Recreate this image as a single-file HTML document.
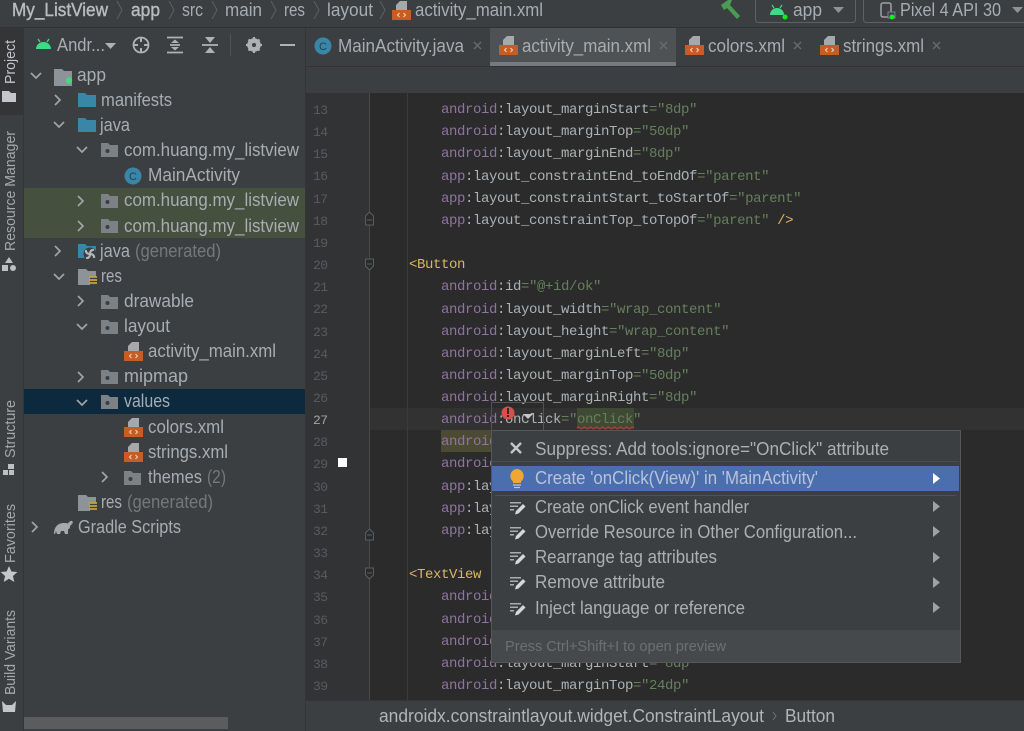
<!DOCTYPE html>
<html><head><meta charset="utf-8"><style>
html,body{margin:0;padding:0;background:#3c3f41;width:1024px;height:731px;overflow:hidden}
svg{display:block}
text{font-family:"Liberation Sans",sans-serif;font-size:18px;fill:#a6adb3}
.g{fill:#74787b}
.c text,text.c{font-family:"Liberation Mono",monospace;font-size:14px;letter-spacing:-.4px}
text.n{font-family:"Liberation Mono",monospace;font-size:13px;fill:#585c5f;letter-spacing:-.5px}
.p{fill:#8f73a3}.w{fill:#adb1b3}.v{fill:#64805a}.t{fill:#dcb464}
.pop{fill:#aab0b3}
.fold{fill:#7c8186}
.arr{fill:none;stroke:#a0a4a6;stroke-width:1.700}
</style></head><body>
<svg width="1024" height="731" viewBox="0 0 1024 731" xmlns="http://www.w3.org/2000/svg">
<defs>
<g id="fd"><path class="fold" d="M0 1h7l2 2h8v12H0z"/><circle cx="6.500" cy="9" r="2" fill="#3c3f41"/></g>
<g id="fb"><path fill="#3a86a8" d="M0 1h7l2 2h9v12H0z"/></g>
<g id="xml"><path fill="#a4a9ac" d="M8 0h7v9H4V4z"/><rect x="0" y="9" width="19" height="10" fill="#c75d22"/><path d="M7.500 12l-2 2 2 2M11.500 12l2 2-2 2" fill="none" stroke="#e8d8cc" stroke-width="1"/></g>
<g id="au"><path class="arr" d="M0 0l5 5 5-5"/></g>
<g id="ar"><path class="arr" d="M0 0l5 5-5 5"/></g>
<g id="bul"><path fill="#a9adb0" d="M1 4h11v1.500H1zM1 7.500h8V9H1zM1 11h4v1.500H1z"/><path fill="#d5d8da" d="M7 13l7-7 2.500 2.500-7 7-3.500 1z"/></g>
<g id="tri"><path fill="#9ea2a5" d="M0 0l7 5.500-7 5.500z"/></g>
<g id="xx"><path d="M0 0l7 7M7 0l-7 7" stroke="#696c6e" stroke-width="1.300" fill="none"/></g>
<g id="fr"><path d="M0 0h8l2 2h8v5.500h-6V16H0z" fill="#8d9499"/><path d="M11 8h8M11 11h8M11 14h8" stroke="#c9a03c" stroke-width="1.800"/></g>
<clipPath id="ed"><rect x="306" y="93" width="718" height="607"/></clipPath>
</defs>

<rect width="1024" height="731" fill="#3c3f41"/>
<rect x="0" y="27" width="1024" height="1" fill="#2f3132"/>

<!-- title bar -->
<text x="12" y="16" textLength="96" lengthAdjust="spacingAndGlyphs" style="fill:#b8bcbe;stroke:#b8bcbe;stroke-width:.4">My_ListView</text>
<text x="131" y="16" textLength="29" lengthAdjust="spacingAndGlyphs" style="fill:#b8bcbe;stroke:#b8bcbe;stroke-width:.4">app</text>
<text x="182" y="16" textLength="21" lengthAdjust="spacingAndGlyphs">src</text>
<text x="225" y="16" textLength="37" lengthAdjust="spacingAndGlyphs">main</text>
<text x="284" y="16" textLength="21" lengthAdjust="spacingAndGlyphs">res</text>
<text x="327" y="16" textLength="46" lengthAdjust="spacingAndGlyphs">layout</text>
<text x="415" y="16" textLength="128" lengthAdjust="spacingAndGlyphs">activity_main.xml</text>
<g fill="none" stroke="#5d6063" stroke-width="1"><path d="M117 1l5 9-5 9M169 1l5 9-5 9M212 1l5 9-5 9M271 1l5 9-5 9M314 1l5 9-5 9M380 1l5 9-5 9"/></g>
<use href="#xml" x="392" y="1"/>

<!-- hammer -->
<path d="M721 5l7-5h4l-2 5 10 11-3 3-10-11-3 2z" fill="#499c54"/>
<rect x="755.500" y="-5" width="100" height="27.500" rx="3" fill="none" stroke="#5e6163"/>
<rect x="863.500" y="-5" width="170" height="27.500" rx="3" fill="none" stroke="#5e6163"/>
<path d="M770 15c0-4 3-7 7-7s7 3 7 7z" fill="#3ddc84"/><path d="M772 5l2 3M782 5l-2 3" stroke="#3ddc84" stroke-width="1.200"/>
<circle cx="785" cy="17" r="2.500" fill="#0f0"/>
<text x="793" y="16" textLength="29" lengthAdjust="spacingAndGlyphs">app</text>
<path d="M833 7h11l-5.500 6z" fill="#8f9396"/>
<rect x="881" y="3" width="10" height="14" rx="2" fill="none" stroke="#9ea2a5" stroke-width="1.500"/>
<rect x="888" y="12" width="7" height="6" fill="#3c3f41" stroke="#8a6fb0"/>
<circle cx="892" cy="17" r="2.500" fill="#0f0"/>
<text x="900" y="16" textLength="101" lengthAdjust="spacingAndGlyphs">Pixel 4 API 30</text>
<path d="M1012 7h11l-5.500 6z" fill="#8f9396"/>

<!-- left strip -->
<rect x="0" y="28" width="23" height="87" fill="#333537"/>
<rect x="23" y="28" width="1" height="703" fill="#333537"/>
<text transform="translate(15 84) rotate(-90)" textLength="44" lengthAdjust="spacingAndGlyphs" style="font-size:15px;fill:#c4c7c9">Project</text>
<text transform="translate(15 251) rotate(-90)" textLength="120" lengthAdjust="spacingAndGlyphs" style="font-size:15px;fill:#a4a8aa">Resource Manager</text>
<text transform="translate(15 458) rotate(-90)" textLength="58" lengthAdjust="spacingAndGlyphs" style="font-size:15px;fill:#a4a8aa">Structure</text>
<text transform="translate(15 563) rotate(-90)" textLength="59" lengthAdjust="spacingAndGlyphs" style="font-size:15px;fill:#a4a8aa">Favorites</text>
<text transform="translate(15 695) rotate(-90)" textLength="85" lengthAdjust="spacingAndGlyphs" style="font-size:15px;fill:#a4a8aa">Build Variants</text>
<path d="M2 91h7l2 2h5v9H2z" fill="#c4c7c9"/>
<path d="M9 257l4 6H5zM2 265h6v6H2z" fill="#bdc0c2"/><circle cx="13" cy="268" r="3" fill="#bdc0c2"/>
<path d="M8 464h6v5H8zM3 470h5v5H3zM9 470h5v5H9z" fill="#bdc0c2"/>
<path d="M9 566l2.400 5.500 6 .5-4.500 4 1.400 6-5.300-3.200L3.700 582l1.400-6-4.500-4 6-.5z" fill="#c4c7c9"/>
<path d="M2 701l4 4h6l4-4-1 11H3z" fill="#c4c7c9"/>

<!-- project toolbar -->
<path d="M36 49c0-4 3.500-7 7.500-7s7.500 3 7.500 7z" fill="#3ddc84"/><path d="M38 39l2 3M49 39l-2 3" stroke="#3ddc84" stroke-width="1.300"/>
<text x="57" y="51" textLength="48" lengthAdjust="spacingAndGlyphs">Andr...</text>
<path d="M105 43h11l-5.500 6z" fill="#aeb2b4"/>
<circle cx="141" cy="45" r="7.500" fill="none" stroke="#aeb2b4" stroke-width="1.800"/>
<path d="M141 37v5M141 48v5M133 45h5M144 45h5" stroke="#aeb2b4" stroke-width="2"/>
<path d="M167 37.500h16M167 52.500h16M170 45h10" stroke="#aeb2b4" stroke-width="1.800"/><path d="M171 43h8l-4-3.500zM171 47h8l-4 3.500z" fill="#aeb2b4"/>
<path d="M202 45h16" stroke="#aeb2b4" stroke-width="1.800"/><path d="M205 37h10l-5 6zM205 53h10l-5-6z" fill="#aeb2b4"/>
<rect x="230" y="34" width="1" height="22" fill="#515457"/>
<circle cx="254" cy="45" r="5" fill="none" stroke="#aeb2b4" stroke-width="3.500"/>
<path d="M254 37v16M246 45h16M248.500 39.500l11 11M259.500 39.500l-11 11" stroke="#aeb2b4" stroke-width="2.200"/>
<circle cx="254" cy="45" r="2" fill="#3c3f41"/>
<rect x="280" y="44" width="15" height="2" fill="#aeb2b4"/>

<!-- tree highlights -->
<rect x="24" y="188" width="281" height="50" fill="#45503f"/>
<rect x="24" y="389" width="281" height="25" fill="#0d293e"/>
<rect x="305" y="28" width="1" height="703" fill="#333537"/>

<!-- tree -->
<use href="#au" x="31" y="73"/>
<path d="M54 69h8l2 2h8v15H54z" fill="#8d9499"/><circle cx="69" cy="80.500" r="3.200" fill="#3ddc84"/>
<text x="77" y="81" textLength="29" lengthAdjust="spacingAndGlyphs">app</text>
<use href="#ar" x="55" y="95"/><use href="#fb" x="78" y="92"/>
<text x="101" y="106" textLength="71" lengthAdjust="spacingAndGlyphs">manifests</text>
<use href="#au" x="54" y="122"/><use href="#fb" x="78" y="117"/>
<text x="100" y="131" textLength="30" lengthAdjust="spacingAndGlyphs">java</text>
<use href="#au" x="77" y="147"/><use href="#fd" x="101" y="142"/>
<text x="124" y="156" textLength="175" lengthAdjust="spacingAndGlyphs">com.huang.my_listview</text>
<circle cx="133" cy="176" r="8.500" fill="#3a86a8"/><text x="129" y="180" style="font-size:11px;fill:#24404f">C</text>
<text x="148" y="181" textLength="92" lengthAdjust="spacingAndGlyphs">MainActivity</text>
<use href="#ar" x="78" y="196"/><use href="#fd" x="101" y="193"/>
<text x="124" y="206" textLength="175" lengthAdjust="spacingAndGlyphs">com.huang.my_listview</text>
<use href="#ar" x="78" y="221"/><use href="#fd" x="101" y="218"/>
<text x="124" y="232" textLength="175" lengthAdjust="spacingAndGlyphs">com.huang.my_listview</text>
<use href="#ar" x="55" y="246"/><use href="#fb" x="78" y="243"/>
<circle cx="90" cy="254" r="6.500" fill="#3c3f41"/>
<g stroke="#b4b9bc" stroke-width="2.200" stroke-linecap="round" fill="none"><path d="M90 254c0-2 1-4 3-4M90 254c2 0 4 1 4 3M90 254c0 2-1 4-3 4M90 254c-2 0-4-1-4-3"/></g>
<text x="100" y="257" textLength="30" lengthAdjust="spacingAndGlyphs">java</text>
<text x="135" y="257" textLength="86" lengthAdjust="spacingAndGlyphs" class="g">(generated)</text>
<use href="#au" x="54" y="274"/>
<use href="#fr" x="78" y="269"/>
<text x="101" y="282" textLength="21" lengthAdjust="spacingAndGlyphs">res</text>
<use href="#ar" x="78" y="296"/><use href="#fd" x="101" y="294"/>
<text x="124" y="307" textLength="70" lengthAdjust="spacingAndGlyphs">drawable</text>
<use href="#au" x="77" y="324"/><use href="#fd" x="101" y="319"/>
<text x="124" y="332" textLength="46" lengthAdjust="spacingAndGlyphs">layout</text>
<use href="#xml" x="124" y="342"/>
<text x="148" y="357" textLength="128" lengthAdjust="spacingAndGlyphs">activity_main.xml</text>
<use href="#ar" x="78" y="372"/><use href="#fd" x="101" y="369"/>
<text x="124" y="382" textLength="64" lengthAdjust="spacingAndGlyphs">mipmap</text>
<use href="#au" x="77" y="400"/><use href="#fd" x="101" y="394"/>
<text x="124" y="407" textLength="46" lengthAdjust="spacingAndGlyphs">values</text>
<use href="#xml" x="124" y="418"/>
<text x="148" y="433" textLength="76" lengthAdjust="spacingAndGlyphs">colors.xml</text>
<use href="#xml" x="124" y="443"/>
<text x="148" y="458" textLength="80" lengthAdjust="spacingAndGlyphs">strings.xml</text>
<use href="#ar" x="102" y="472"/><use href="#fd" x="124" y="470"/>
<text x="148" y="483" textLength="54" lengthAdjust="spacingAndGlyphs">themes</text>
<text x="207" y="483" textLength="19" lengthAdjust="spacingAndGlyphs" class="g">(2)</text>
<use href="#fr" x="78" y="495"/>
<text x="101" y="508" textLength="21" lengthAdjust="spacingAndGlyphs">res</text>
<text x="127" y="508" textLength="86" lengthAdjust="spacingAndGlyphs" class="g">(generated)</text>
<use href="#ar" x="32" y="522"/>
<path d="M54 534c0-6 3-11 10-11 2 0 3 0 4 .5 1-2 3-3 4-2.500 1 .5 1 2 0 3l-2 2c0 3-1 3-2 3v5h-3l-1-3h-3l-1 3h-3l-1-3-1 3z" fill="#a4a9ac"/>
<text x="78" y="533" textLength="103" lengthAdjust="spacingAndGlyphs">Gradle Scripts</text>

<rect x="24" y="717" width="204" height="12" fill="#5a5c5e"/>

<!-- tabs -->
<rect x="306" y="28" width="718" height="38" fill="#3c3f41"/>
<rect x="490" y="28" width="186" height="38" fill="#4e5254"/>
<rect x="490" y="62" width="186" height="4" fill="#747a80"/>
<rect x="306" y="66" width="718" height="1" fill="#323232"/>
<circle cx="323" cy="46" r="8.500" fill="#3a86a8"/><text x="319" y="50" style="font-size:11px;fill:#24404f">C</text>
<text x="338" y="52" textLength="126" lengthAdjust="spacingAndGlyphs">MainActivity.java</text>
<use href="#xx" x="474" y="42"/>
<use href="#xml" x="499" y="36"/>
<text x="522" y="52" textLength="129" lengthAdjust="spacingAndGlyphs">activity_main.xml</text>
<use href="#xx" x="660" y="42"/>
<use href="#xml" x="685" y="36"/>
<text x="708" y="52" textLength="77" lengthAdjust="spacingAndGlyphs">colors.xml</text>
<use href="#xx" x="794" y="42"/>
<use href="#xml" x="820" y="36"/>
<text x="843" y="52" textLength="81" lengthAdjust="spacingAndGlyphs">strings.xml</text>
<use href="#xx" x="933" y="42"/>

<!-- editor -->
<rect x="306" y="93" width="718" height="607" fill="#2b2b2b"/>
<rect x="306" y="93" width="63" height="607" fill="#313335"/>
<rect x="370" y="408" width="654" height="22" fill="#323232"/>
<rect x="369" y="93" width="1" height="607" fill="#47494b"/>
<rect x="407" y="93" width="1" height="607" fill="#3b3b3b"/>
<rect x="441" y="430" width="60" height="22" fill="#4b4a33"/>
<rect x="338" y="458" width="9" height="9" fill="#fff"/>

<g clip-path="url(#ed)">
<text class="n" x="313" y="114">13</text><text class="n" x="313" y="136">14</text><text class="n" x="313" y="158">15</text><text class="n" x="313" y="180">16</text><text class="n" x="313" y="203">17</text><text class="n" x="313" y="225">18</text><text class="n" x="313" y="247">19</text><text class="n" x="313" y="269">20</text><text class="n" x="313" y="291">21</text><text class="n" x="313" y="313">22</text><text class="n" x="313" y="336">23</text><text class="n" x="313" y="358">24</text><text class="n" x="313" y="380">25</text><text class="n" x="313" y="402">26</text><text class="n" x="313" y="424" style="fill:#a4a3a3">27</text><text class="n" x="313" y="446">28</text><text class="n" x="313" y="468">29</text><text class="n" x="313" y="491">30</text><text class="n" x="313" y="513">31</text><text class="n" x="313" y="535">32</text><text class="n" x="313" y="557">33</text><text class="n" x="313" y="579">34</text><text class="n" x="313" y="601">35</text><text class="n" x="313" y="624">36</text><text class="n" x="313" y="646">37</text><text class="n" x="313" y="668">38</text><text class="n" x="313" y="690">39</text>
<text class="c" x="441" y="113"><tspan class="p">android</tspan><tspan class="w">:layout_marginStart</tspan><tspan class="v">="8dp"</tspan></text>
<text class="c" x="441" y="135"><tspan class="p">android</tspan><tspan class="w">:layout_marginTop</tspan><tspan class="v">="50dp"</tspan></text>
<text class="c" x="441" y="157"><tspan class="p">android</tspan><tspan class="w">:layout_marginEnd</tspan><tspan class="v">="8dp"</tspan></text>
<text class="c" x="441" y="180"><tspan class="p">app</tspan><tspan class="w">:layout_constraintEnd_toEndOf</tspan><tspan class="v">="parent"</tspan></text>
<text class="c" x="441" y="202"><tspan class="p">app</tspan><tspan class="w">:layout_constraintStart_toStartOf</tspan><tspan class="v">="parent"</tspan></text>
<text class="c" x="441" y="224"><tspan class="p">app</tspan><tspan class="w">:layout_constraintTop_toTopOf</tspan><tspan class="v">="parent"</tspan><tspan class="t"> /&gt;</tspan></text>
<text class="c t" x="409" y="268">&lt;Button</text>
<text class="c" x="441" y="290"><tspan class="p">android</tspan><tspan class="w">:id</tspan><tspan class="v">="@+id/ok"</tspan></text>
<text class="c" x="441" y="313"><tspan class="p">android</tspan><tspan class="w">:layout_width</tspan><tspan class="v">="wrap_content"</tspan></text>
<text class="c" x="441" y="335"><tspan class="p">android</tspan><tspan class="w">:layout_height</tspan><tspan class="v">="wrap_content"</tspan></text>
<text class="c" x="441" y="357"><tspan class="p">android</tspan><tspan class="w">:layout_marginLeft</tspan><tspan class="v">="8dp"</tspan></text>
<text class="c" x="441" y="379"><tspan class="p">android</tspan><tspan class="w">:layout_marginTop</tspan><tspan class="v">="50dp"</tspan></text>
<text class="c" x="441" y="401"><tspan class="p">android</tspan><tspan class="w">:layout_marginRight</tspan><tspan class="v">="8dp"</tspan></text>
<rect x="577" y="408" width="57" height="21" fill="#3f4a35"/>
<path d="M577 428q1.500-2 3 0t3 0 3 0 3 0 3 0 3 0 3 0 3 0 3 0 3 0 3 0 3 0 3 0 3 0 3 0 3 0 3 0 3 0 3 0" stroke="#c2403c" stroke-width="1" fill="none"/>
<text class="c" x="441" y="423"><tspan class="p">android</tspan><tspan class="w">:onClick</tspan><tspan class="v">="onClick"</tspan></text>
<text class="c" x="441" y="445"><tspan class="p">android</tspan></text>
<text class="c" x="441" y="467"><tspan class="p">android</tspan></text>
<text class="c" x="441" y="490"><tspan class="p">app</tspan><tspan class="w">:layout</tspan></text>
<text class="c" x="441" y="512"><tspan class="p">app</tspan><tspan class="w">:layout</tspan></text>
<text class="c" x="441" y="534"><tspan class="p">app</tspan><tspan class="w">:layout</tspan></text>
<text class="c t" x="409" y="578">&lt;TextView</text>
<text class="c" x="441" y="600"><tspan class="p">android</tspan></text>
<text class="c" x="441" y="623"><tspan class="p">android</tspan></text>
<text class="c" x="441" y="645"><tspan class="p">android</tspan></text>
<text class="c" x="441" y="667"><tspan class="p">android</tspan><tspan class="w">:layout_marginStart</tspan><tspan class="v">="8dp"</tspan></text>
<text class="c" x="441" y="689"><tspan class="p">android</tspan><tspan class="w">:layout_marginTop</tspan><tspan class="v">="24dp"</tspan></text>
</g>
<!-- fold marks -->
<g fill="#2b2b2b" stroke="#5a5d5f">
<path d="M365.500 225v-9l4-4 4 4v9zM367 220h5"/>
<path d="M365.500 259h8v7l-4 4-4-4zM367 264h5"/>
<path d="M365.500 568h8v7l-4 4-4-4zM367 573h5"/>
<path d="M365.500 540v-7l4-4 4 4v7zM367 535h5"/>
</g>

<!-- intention box -->
<rect x="491.500" y="402.500" width="52" height="29" fill="none" stroke="#515355"/>
<circle cx="508" cy="413" r="6.500" fill="#d94f4b"/><rect x="507" y="408" width="2" height="6" fill="#3c2a2a"/><rect x="507" y="415" width="2" height="2" fill="#3c2a2a"/>
<path d="M523 414h10l-5 5z" fill="#c4c7c9"/>

<!-- popup -->
<rect x="491.500" y="430.500" width="469" height="232" fill="#3c3f41" stroke="#55585a"/>
<rect x="492" y="630" width="468" height="32" fill="#46494b"/>
<rect x="492" y="461" width="467" height="1" fill="#4a4d4f"/>
<rect x="492" y="466" width="467" height="25" fill="#4b6eaf"/>
<rect x="495" y="495" width="461" height="1" fill="#4f5254"/>
<path d="M511 443l10 10M521 443l-10 10" stroke="#c4c7c9" stroke-width="2.400"/>
<path d="M517 469a7 7 0 0 1 4 12.500v1.500h-8v-1.500a7 7 0 0 1 4-12.500z" fill="#f0a732"/><path d="M513 485h8M514 487.500h6" stroke="#c4c7c9" stroke-width="1.300"/>
<text class="pop" x="535" y="455" textLength="354" lengthAdjust="spacingAndGlyphs">Suppress: Add tools:ignore="OnClick" attribute</text>
<text x="535" y="484" textLength="283" lengthAdjust="spacingAndGlyphs" style="fill:#b9c3d5">Create 'onClick(View)' in 'MainActivity'</text>
<text class="pop" x="535" y="513" textLength="214" lengthAdjust="spacingAndGlyphs">Create onClick event handler</text>
<text class="pop" x="535" y="538" textLength="322" lengthAdjust="spacingAndGlyphs">Override Resource in Other Configuration...</text>
<text class="pop" x="535" y="563" textLength="182" lengthAdjust="spacingAndGlyphs">Rearrange tag attributes</text>
<text class="pop" x="535" y="588" textLength="130" lengthAdjust="spacingAndGlyphs">Remove attribute</text>
<text class="pop" x="535" y="614" textLength="210" lengthAdjust="spacingAndGlyphs">Inject language or reference</text>
<text x="505" y="651" textLength="221" lengthAdjust="spacingAndGlyphs" style="font-size:15px;fill:#6c7072">Press Ctrl+Shift+I to open preview</text>
<use href="#bul" x="509" y="498"/><use href="#bul" x="509" y="523"/><use href="#bul" x="509" y="548"/><use href="#bul" x="509" y="573"/><use href="#bul" x="509" y="599"/>
<path d="M933 473l7 5.500-7 5.500z" fill="#fff"/>
<use href="#tri" x="933" y="501"/><use href="#tri" x="933" y="526"/><use href="#tri" x="933" y="552"/><use href="#tri" x="933" y="577"/><use href="#tri" x="933" y="602"/>

<!-- bottom crumbs -->
<rect x="306" y="700" width="718" height="31" fill="#3c3f41"/>
<rect x="306" y="700" width="718" height="1" fill="#333537"/>
<text x="379" y="722" textLength="385" lengthAdjust="spacingAndGlyphs" style="fill:#b0b5b8">androidx.constraintlayout.widget.ConstraintLayout</text>
<path d="M773 712l3 4-3 4" fill="none" stroke="#6e7173"/>
<text x="785" y="722" textLength="50" lengthAdjust="spacingAndGlyphs" style="fill:#b0b5b8">Button</text>
</svg>
</body></html>
